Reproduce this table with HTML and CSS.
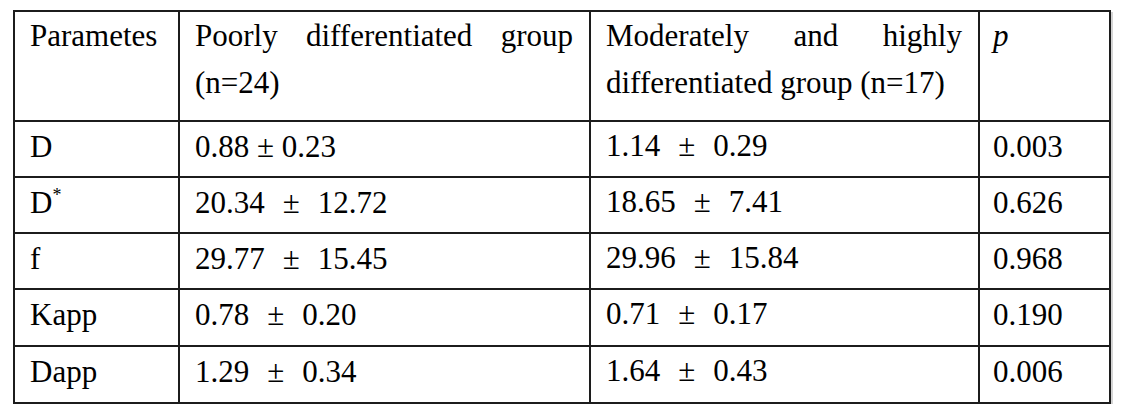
FILE: index.html
```html
<!DOCTYPE html>
<html lang="en">
<head>
<meta charset="utf-8">
<title>Parameters table</title>
<link rel="stylesheet" href="styles.css">
</head>
<body>
<table class="data">
  <colgroup>
    <col class="c1">
    <col class="c2">
    <col class="c3">
    <col class="c4">
  </colgroup>
  <tr class="head">
    <td>Parametes</td>
    <td class="just">Poorly differentiated group (n=24)</td>
    <td class="just">Moderately and highly differentiated group (n=17)</td>
    <td class="pcol"><i>p</i></td>
  </tr>
  <tr class="row">
    <td>D</td>
    <td>0.88 ± 0.23</td>
    <td class="g3">1.14<span class="pm">±</span>0.29</td>
    <td class="pcol">0.003</td>
  </tr>
  <tr class="row">
    <td>D<sup class="star">*</sup></td>
    <td>20.34<span class="pm">±</span>12.72</td>
    <td class="g3">18.65<span class="pm">±</span>7.41</td>
    <td class="pcol">0.626</td>
  </tr>
  <tr class="row">
    <td>f</td>
    <td>29.77<span class="pm">±</span>15.45</td>
    <td class="g3">29.96<span class="pm">±</span>15.84</td>
    <td class="pcol">0.968</td>
  </tr>
  <tr class="row tall">
    <td>Kapp</td>
    <td>0.78<span class="pm">±</span>0.20</td>
    <td class="g3">0.71<span class="pm">±</span>0.17</td>
    <td class="pcol">0.190</td>
  </tr>
  <tr class="row tall">
    <td>Dapp</td>
    <td>1.29<span class="pm">±</span>0.34</td>
    <td class="g3">1.64<span class="pm">±</span>0.43</td>
    <td class="pcol">0.006</td>
  </tr>
</table>
</body>
</html>
```
FILE: styles.css
```css
html, body {
  margin: 0;
  padding: 0;
  background: #ffffff;
}

body {
  font-family: "Liberation Serif", "Times New Roman", serif;
  font-size: 31px;
  color: #000;
}

.data {
  border-collapse: collapse;
  table-layout: fixed;
  width: 1096px;
  margin: 10px 0 0 13px;
  box-shadow: 2px 2px 0 #d4d4d4;
}

.c1 { width: 165px; }
.c2 { width: 411px; }
.c3 { width: 389px; }
.c4 { width: 131px; }

.data td {
  border: 2px solid #1c1c1c;
  padding: 1px 16px 0 15px;
  vertical-align: top;
  line-height: 47px;
  text-align: left;
}

.data td.pcol {
  padding-left: 13px;
}

.head {
  height: 110px;
}

.head td {
  padding-top: 0;
}

.data td.just {
  text-align: justify;
}

.row {
  height: 56px;
}

.row.tall {
  height: 57px;
}

.data td.g3 {
  padding-top: 0;
}

.pm {
  margin: 0 18px;
}

.star {
  font-size: 18px;
  line-height: 0;
  vertical-align: 12px;
}
```
